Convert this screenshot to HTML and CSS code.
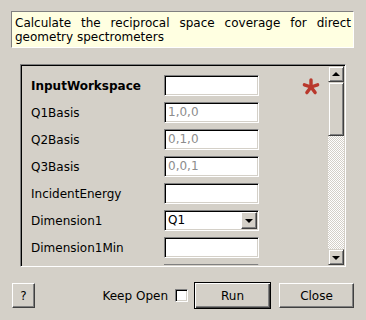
FILE: index.html
```html
<!DOCTYPE html>
<html lang="en">
<head>
    <meta charset="UTF-8">
    <title>CalculateCoverageDGS</title>
    <link rel="stylesheet" href="styles.css">
</head>
<body>
    <div class="dialog">
        <!-- Algorithm summary -->
        <div class="summary">Calculate the reciprocal space coverage for direct geometry spectrometers</div>

        <!-- Property list -->
        <div class="frame">
            <div class="props">
                <label class="prop-name required">InputWorkspace</label>
                <div class="field"></div>
                <div class="star">
                    <svg width="18" height="17" viewBox="0 0 18 17">
                        <g stroke="#b9382c" stroke-width="3.4" stroke-linecap="round">
                            <line x1="9" y1="9" x2="9" y2="2"/>
                            <line x1="9" y1="9" x2="15.6" y2="6.8"/>
                            <line x1="9" y1="9" x2="13.1" y2="14.6"/>
                            <line x1="9" y1="9" x2="4.9" y2="14.6"/>
                            <line x1="9" y1="9" x2="2.4" y2="6.8"/>
                        </g>
                    </svg>
                </div>

                <label class="prop-name">Q1Basis</label>
                <div class="field placeholder">1,0,0</div>
                <div></div>

                <label class="prop-name">Q2Basis</label>
                <div class="field placeholder">0,1,0</div>
                <div></div>

                <label class="prop-name">Q3Basis</label>
                <div class="field placeholder">0,0,1</div>
                <div></div>

                <label class="prop-name">IncidentEnergy</label>
                <div class="field"></div>
                <div></div>

                <label class="prop-name">Dimension1</label>
                <div class="field combo">
                    <span class="combo-text">Q1</span>
                    <span class="combo-arrow"><span class="tri-down"></span></span>
                </div>
                <div></div>

                <label class="prop-name">Dimension1Min</label>
                <div class="field"></div>
                <div></div>

                <!-- next row, scrolled out of view -->
                <label class="prop-name"></label>
                <div class="field"></div>
                <div></div>
            </div>
            <div class="scrollbar">
                <div class="sb-btn"><span class="tri-up"></span></div>
                <div class="sb-thumb"></div>
                <div class="sb-track"></div>
                <div class="sb-btn"><span class="tri-down"></span></div>
            </div>
        </div>

        <!-- Buttons -->
        <div class="button-row">
            <button class="btn help">?</button>
            <div class="spacer"></div>
            <label class="keep-open">Keep Open <span class="checkbox"></span></label>
            <button class="btn default">Run</button>
            <button class="btn">Close</button>
        </div>
    </div>
</body>
</html>
```

FILE: styles.css
```css
html, body {
    margin: 0;
    padding: 0;
    background-color: #d4d0c8;
}
body {
    font-family: "DejaVu Sans", sans-serif;
    font-size: 12px;
    color: #000;
    width: 366px;
    height: 320px;
    overflow: hidden;
}
.summary {
    margin: 11px 12px 0 11px;
    height: 28px;
    padding: 4px 2px 3px 3px;
    line-height: 14px;
    text-align: justify;
    background-color: #ffffe1;
    border: 1px solid;
    border-color: #808080 #ffffff #ffffff #808080;
}
.frame {
    display: flex;
    margin: 16px 20px 0 20px;
    height: 199px;
    border: 1px solid;
    border-color: #808080 #ffffff #ffffff #808080;
    box-shadow: inset 1px 1px #000, inset -1px -1px #d4d0c8;
    padding: 1px;
    overflow: hidden;
}
.props {
    flex: 1;
    display: grid;
    grid-template-columns: 133px 95px 1fr;
    grid-auto-rows: 21px;
    row-gap: 6px;
    align-items: center;
    padding: 9px 0 0 9px;
    overflow: hidden;
}
.prop-name {
    white-space: nowrap;
}
.prop-name.required {
    font-weight: bold;
}
.field {
    box-sizing: border-box;
    height: 21px;
    background-color: #fff;
    border: 1px solid;
    border-color: #808080 #ffffff #ffffff #808080;
    box-shadow: inset 1px 1px #000, inset -1px -1px #d4d0c8;
    padding: 0 3px;
    line-height: 19px;
}
.placeholder {
    color: #8c8c8c;
}
.star {
    padding-left: 43px;
    height: 17px;
    margin-top: 1px;
}
.combo {
    display: flex;
    padding-right: 1px;
}
.combo-text {
    flex: 1;
}
.combo-arrow {
    box-sizing: border-box;
    width: 16px;
    height: 17px;
    margin-top: 1px;
    display: flex;
    align-items: center;
    justify-content: center;
    background-color: #d4d0c8;
    border: 1px solid;
    border-color: #fff #404040 #404040 #fff;
    box-shadow: inset -1px -1px #808080;
}
.tri-down,
.tri-up {
    width: 0;
    height: 0;
    border-left: 4px solid transparent;
    border-right: 4px solid transparent;
}
.tri-down {
    border-top: 4px solid #000;
    margin-top: 1px;
}
.tri-up {
    border-bottom: 4px solid #000;
    margin-top: -1px;
}
.scrollbar {
    width: 16px;
    display: flex;
    flex-direction: column;
}
.sb-btn,
.sb-thumb {
    box-sizing: border-box;
    background-color: #d4d0c8;
    border: 1px solid;
    border-color: #d4d0c8 #404040 #404040 #d4d0c8;
    box-shadow: inset 1px 1px #fff, inset -1px -1px #808080;
}
.sb-btn {
    height: 16px;
    display: flex;
    align-items: center;
    justify-content: center;
}
.sb-thumb {
    height: 54px;
}
.sb-track {
    flex: 1;
    background: repeating-conic-gradient(#ffffff 0 25%, #d4d0c8 0 50%) 0 0 / 2px 2px;
}
.button-row {
    display: flex;
    align-items: center;
    margin: 15px 12px 0 12px;
    height: 27px;
}
.spacer {
    flex: 1;
}
.btn {
    font-family: "DejaVu Sans", sans-serif;
    font-size: 12px;
    color: #000;
    height: 25px;
    padding: 0;
    background-color: #d4d0c8;
    border: 1px solid;
    border-color: #fff #404040 #404040 #fff;
    box-shadow: inset -1px -1px #808080;
    cursor: pointer;
}
.btn.help {
    width: 23px;
}
.btn.default {
    width: 77px;
    height: 27px;
    border: 1px solid #000;
    box-shadow: inset 1px 1px #fff, inset -1px -1px #404040, inset -2px -2px #808080;
    margin-right: 8px;
}
.btn:last-child {
    width: 75px;
}
.keep-open {
    display: flex;
    align-items: center;
    gap: 7px;
    margin-right: 6px;
}
.checkbox {
    box-sizing: border-box;
    width: 13px;
    height: 13px;
    background-color: #fff;
    border: 1px solid;
    border-color: #808080 #fff #fff #808080;
    box-shadow: inset 1px 1px #000, inset -1px -1px #d4d0c8;
}
```
